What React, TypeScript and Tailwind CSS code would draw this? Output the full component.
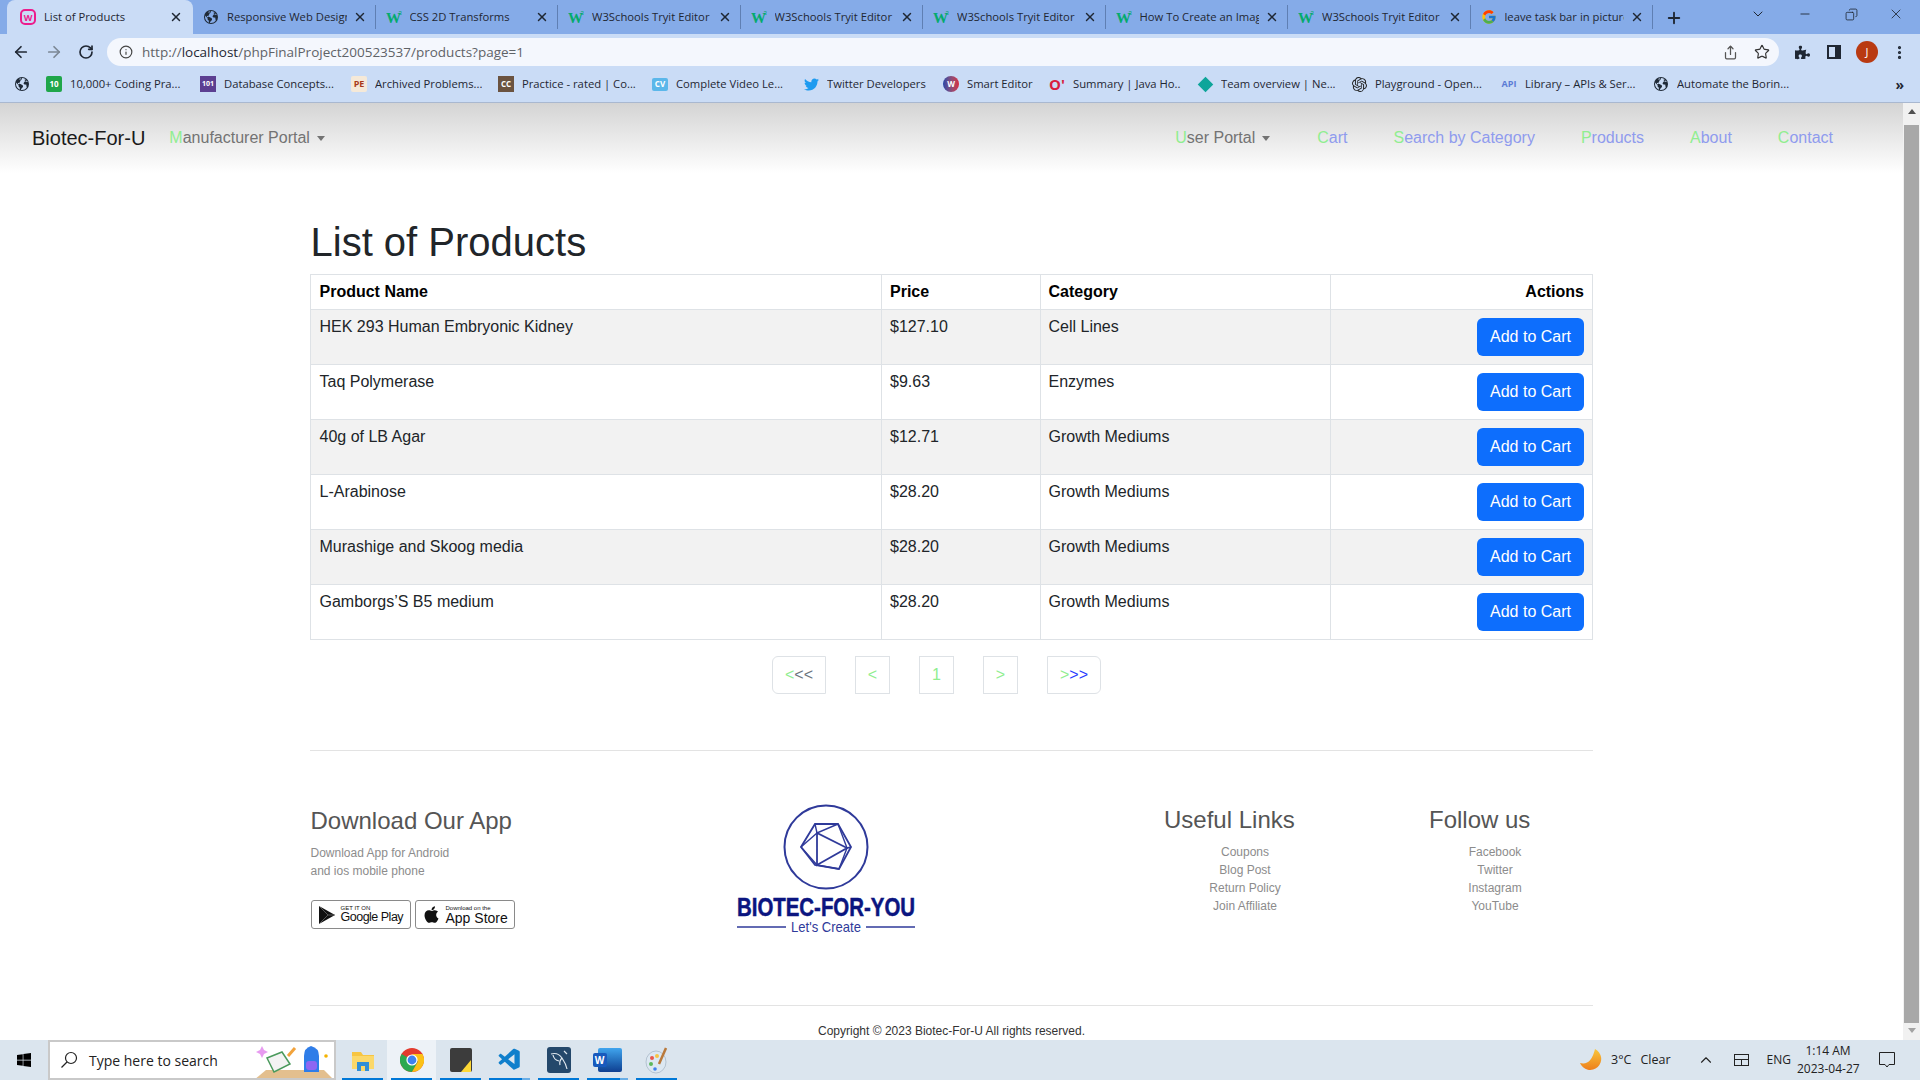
import { ArrowLeft, ArrowRight, ChevronDown, ChevronUp, Copy, Info, Minus, MoreVertical, Plus, RotateCw, Share, Star, X } from "lucide-react";
import { FaApple, FaPuzzlePiece, FaTwitter, FaWindows } from "react-icons/fa";
import { FcGoogle } from "react-icons/fc";
import { SiOpenai } from "react-icons/si";
import { VscVscode } from "react-icons/vsc";
import { IoEarth } from "react-icons/io5";
import { ReactNode } from "react";

const ui = "font-['Open_Sans',sans-serif]";

const W3 = () => (
  <svg width="16" height="16" viewBox="0 0 16 16">
    <text x="0" y="14" fontFamily="Liberation Serif" fontWeight="700" fontSize="15" fill="#04aa6d">W</text>
    <text x="12.5" y="6" fontFamily="Liberation Sans" fontSize="6" fill="#04aa6d">3</text>
  </svg>
);

const Globe = () => <IoEarth size={16} className="text-[#1f2a37]" />;

const WebIcon = () => (
  <span className="flex h-4 w-4 items-center justify-center rounded-[5px] border-2 border-[#ec1c8c] text-[9px] font-bold leading-none text-[#ec1c8c]">W</span>
);

const tabs: { icon: ReactNode; title: string }[] = [
  { icon: <Globe />, title: "Responsive Web Design" },
  { icon: <W3 />, title: "CSS 2D Transforms" },
  { icon: <W3 />, title: "W3Schools Tryit Editor" },
  { icon: <W3 />, title: "W3Schools Tryit Editor" },
  { icon: <W3 />, title: "W3Schools Tryit Editor" },
  { icon: <W3 />, title: "How To Create an Image" },
  { icon: <W3 />, title: "W3Schools Tryit Editor" },
  { icon: <FcGoogle size={16} />, title: "leave task bar in picture" },
];

const bookmarks: { icon: ReactNode; title: string; width: string }[] = [
  { icon: <span className="flex h-4 w-4 items-center justify-center rounded-[2px] bg-[#1fa64a] text-[8px] font-bold text-white">10</span>, title: "10,000+ Coding Pra...", width: "w-[114px]" },
  { icon: <span className="flex h-4 w-4 items-center justify-center bg-[#5c3f91] text-[7px] font-bold text-white">101</span>, title: "Database Concepts...", width: "w-[111px]" },
  { icon: <span className="flex h-4 w-4 items-center justify-center rounded-[2px] bg-[#f5e9d8] text-[9px] font-bold text-[#a8391b]">PE</span>, title: "Archived Problems...", width: "w-[107px]" },
  { icon: <span className="flex h-4 w-4 items-center justify-center bg-[#6b5340] text-[8px] font-bold text-white">CC</span>, title: "Practice - rated | Co...", width: "w-[114px]" },
  { icon: <span className="flex h-[13px] w-4 items-center justify-center rounded-[2px] bg-[#5bb7ea] text-[8px] font-bold text-white">CV</span>, title: "Complete Video Le...", width: "w-[111px]" },
  { icon: <FaTwitter size={15} className="text-[#1d9bf0]" />, title: "Twitter Developers", width: "w-[100px]" },
  { icon: <span className="flex h-4 w-4 items-center justify-center rounded-full bg-gradient-to-r from-[#2446a8] to-[#d8243c] text-[8px] font-bold text-white">W</span>, title: "Smart Editor", width: "w-[66px]" },
  { icon: <span className="text-[15px] font-bold leading-4 text-[#d81e3f]">O'</span>, title: "Summary | Java Ho...", width: "w-[108px]" },
  { icon: <span className="h-[11px] w-[11px] rotate-45 bg-[#0ea59a]" />, title: "Team overview | Ne...", width: "w-[114px]" },
  { icon: <SiOpenai size={15} className="text-[#222]" />, title: "Playground - Open...", width: "w-[110px]" },
  { icon: <span className="text-[9px] font-bold text-[#5b7bd5]">API</span>, title: "Library – APIs & Ser...", width: "w-[112px]" },
  { icon: <Globe />, title: "Automate the Borin...", width: "w-[113px]" },
];

const products = [
  { name: "HEK 293 Human Embryonic Kidney", price: "$127.10", category: "Cell Lines" },
  { name: "Taq Polymerase", price: "$9.63", category: "Enzymes" },
  { name: "40g of LB Agar", price: "$12.71", category: "Growth Mediums" },
  { name: "L-Arabinose", price: "$28.20", category: "Growth Mediums" },
  { name: "Murashige and Skoog media", price: "$28.20", category: "Growth Mediums" },
  { name: "Gamborgs’S B5 medium", price: "$28.20", category: "Growth Mediums" },
];

const Caret = () => <span className="ml-[7px] mr-[1px] inline-block h-0 w-0 border-x-[4px] border-t-[5px] border-x-transparent border-t-[#737373] align-middle" />;

const NavLink = ({ label }: { label: string }) => (
  <a className="text-[#8f9bee]"><span className="text-[#90ee90]">{label[0]}</span>{label.slice(1)}</a>
);

const Dropdown = ({ label }: { label: string }) => (
  <a className="whitespace-nowrap text-[#737373]"><span className="text-[#90ee90]">{label[0]}</span>{label.slice(1)}<Caret /></a>
);

function BrowserChrome() {
  return (
    <header className={`${ui} shrink-0 text-[#1f2733]`}>
      <div className="flex h-[34px] bg-[#85abe8] pl-[7px]">
        <div className="flex w-[186px] items-center rounded-t-[8px] bg-[#cadcf6] pl-[13px] pr-[10px]">
          <WebIcon />
          <span className="ml-[8px] flex-1 whitespace-nowrap text-[11.25px]">List of Products</span>
          <X size={14} strokeWidth={2.5} />
        </div>
        {tabs.map((t, i) => (
          <div key={i} className="my-[5px] flex w-[182.5px] items-center border-r border-[#5f7fb3] pl-[10px] pr-[8px]">
            <span className="flex w-4 shrink-0 justify-center">{t.icon}</span>
            <span className="ml-[8px] flex-1 overflow-hidden whitespace-nowrap text-[11.25px]">{t.title}</span>
            <X size={14} strokeWidth={2.5} className="ml-[6px] shrink-0" />
          </div>
        ))}
        <Plus size={18} strokeWidth={2.5} className="ml-[12px] mt-[9px]" />
        <div className="ml-auto flex h-[28px] items-center pr-[16px]">
          <ChevronDown size={16} strokeWidth={1.5} />
          <Minus size={14} strokeWidth={1.5} className="ml-[32px]" />
          <Copy size={13} strokeWidth={1.5} className="ml-[33px] -scale-x-100" />
          <X size={16} strokeWidth={1.25} className="ml-[30px]" />
        </div>
      </div>
      <div className="flex h-[34px] items-center bg-[#cadcf6] pl-[12px] pr-[12px] pt-[2px]">
        <ArrowLeft size={18} strokeWidth={2.25} />
        <ArrowRight size={18} strokeWidth={2.25} className="ml-[15px] text-[#7b8794]" />
        <RotateCw size={16} strokeWidth={2.5} className="ml-[15px]" />
        <div className="ml-[13px] flex h-[28px] w-[1672px] items-center rounded-full bg-[#f4f7fd] pl-[12px] pr-[9px]">
          <Info size={14} className="text-[#444]" />
          <span className="ml-[9px] text-[13.5px] text-[#5f6368]">http://<span className="text-[#1f2733]">localhost</span>/phpFinalProject200523537/products?page=1</span>
          <Share size={15} className="ml-auto text-[#555]" />
          <Star size={16} strokeWidth={1.75} className="ml-[16px] text-[#333]" />
        </div>
        <FaPuzzlePiece size={15} className="ml-[16px]" />
        <span className="ml-[17px] h-[14px] w-[14px] border-[2px] border-r-[6px] border-[#1f2733]" />
        <span className="ml-[15px] flex h-[22px] w-[22px] items-center justify-center rounded-full bg-[#b93a12] text-[11px] text-white">J</span>
        <MoreVertical size={17} strokeWidth={2.5} className="ml-[13px]" />
      </div>
      <div className="flex h-[35px] items-center border-b border-[#a9b8d0] bg-[#cadcf6] pb-[2px] pl-[14px]">
        <Globe />
        <div className="ml-[16px] flex gap-[16px]">
          {bookmarks.map((b, i) => (
            <div key={i} className="flex items-center gap-[8px]">
              <span className="flex h-4 w-4 shrink-0 items-center justify-center">{b.icon}</span>
              <span className={`${b.width} overflow-hidden whitespace-nowrap text-[11.25px]`}>{b.title}</span>
            </div>
          ))}
        </div>
        <span className="ml-auto pr-[16px] text-[14px] font-bold">»</span>
      </div>
    </header>
  );
}

const PageBox = ({ first, rest, width, rounded, color }: { first: string; rest?: string; width: string; rounded?: string; color?: string }) => (
  <span className={`flex h-[38px] items-center justify-center border border-[#dee2e6] text-[16px] ${width} ${rounded ?? ""}`}>
    <span className="text-[#90ee90]">{first}</span>
    {rest && <span className={color}>{rest}</span>}
  </span>
);

function Logo() {
  return (
    <svg width="180" height="136" viewBox="0 0 180 136" className="block">
      <circle cx="89" cy="46" r="41.5" fill="none" stroke="#2f3a9a" strokeWidth="2" />
      <g fill="none" stroke="#2f3a9a" strokeWidth="1.4" transform="translate(0 4)">
        <polygon points="78,19 101,19 114,42 102,64 78,60 64,42" strokeWidth="1.8" />
        <polygon points="80,28 80,60 110,43" strokeWidth="1.8" />
        <path d="M78 19 80 28 101 19M64 42 80 28M64 42 80 60M101 19 110 43M110 43 114 42M110 43 102 64M80 60 102 64" />
      </g>
      <text x="0" y="115" fontFamily="Liberation Sans" fontWeight="700" fontSize="25" fill="#0b1580" stroke="#0b1580" strokeWidth=".5" textLength="178" lengthAdjust="spacingAndGlyphs">BIOTEC-FOR-YOU</text>
      <line x1="0" y1="126" x2="49" y2="126" stroke="#2f3a9a" strokeWidth="1.5" />
      <line x1="129" y1="126" x2="178" y2="126" stroke="#2f3a9a" strokeWidth="1.5" />
      <text x="54" y="131" fontFamily="Liberation Sans" fontSize="15" fill="#2f3a9a" textLength="70" lengthAdjust="spacingAndGlyphs">Let's Create</text>
    </svg>
  );
}

const StoreBadge = ({ icon, small, big, width, bigSize }: { icon: ReactNode; small: string; big: string; width: string; bigSize: string }) => (
  <div className={`flex h-[29px] items-center gap-[5px] rounded-[3px] border border-[#8a8a8a] bg-white pl-[6px] ${width}`}>
    {icon}
    <div className="leading-none text-[#111]">
      <div className="text-[6px]">{small}</div>
      <div className={`whitespace-nowrap ${bigSize}`}>{big}</div>
    </div>
  </div>
);

function Page() {
  return (
    <main className="min-w-0 flex-1 bg-white font-['Liberation_Sans',sans-serif]">
      <nav className="flex h-[70px] items-start bg-gradient-to-b from-[#d4d4d4] to-white pt-[23px] text-[16px] leading-[24px]">
        <a className="ml-[32px] text-[20px] text-[#1a1a1a]">Biotec-For-U</a>
        <span className="ml-[24px]"><Dropdown label="Manufacturer Portal" /></span>
        <div className="ml-auto mr-[70px] flex gap-[46px]">
          <Dropdown label="User Portal" />
          <NavLink label="Cart" />
          <NavLink label="Search by Category" />
          <NavLink label="Products" />
          <NavLink label="About" />
          <NavLink label="Contact" />
        </div>
      </nav>
      <div className="ml-[310px] w-[1283px]">
        <h1 className="mb-[8px] mt-[45px] pl-[0.5px] text-[40px] leading-[48px] text-[#212529]">List of Products</h1>
        <table className="w-full table-fixed border-collapse border border-[#dee2e6] text-[16px] leading-[24px] text-[#212529]">
          <colgroup>
            <col className="w-[571px]" />
            <col className="w-[159px]" />
            <col className="w-[290px]" />
            <col />
          </colgroup>
          <thead>
            <tr className="text-black">
              <th className="border border-[#dee2e6] py-[5px] pl-[8.5px] pr-[8px] text-left font-bold">Product Name</th>
              <th className="border border-[#dee2e6] px-[8px] py-[5px] text-left font-bold">Price</th>
              <th className="border border-[#dee2e6] py-[5px] pl-[7.5px] pr-[8px] text-left font-bold">Category</th>
              <th className="border border-[#dee2e6] px-[8px] py-[5px] text-right font-bold">Actions</th>
            </tr>
          </thead>
          <tbody>
            {products.map((p, i) => (
              <tr key={i} className={i % 2 === 0 ? "bg-[#f2f2f2]" : "bg-white"}>
                <td className="border border-[#dee2e6] pl-[8.5px] pr-[8px] pt-[5px] align-top">{p.name}</td>
                <td className="border border-[#dee2e6] px-[8px] pt-[5px] align-top">{p.price}</td>
                <td className="border border-[#dee2e6] pl-[7.5px] pr-[8px] pt-[5px] align-top">{p.category}</td>
                <td className="border border-[#dee2e6] px-[8px] py-[8px] text-right">
                  <button className="h-[38px] w-[107px] rounded-[6px] bg-[#0d6efd] text-[16px] text-white">Add to Cart</button>
                </td>
              </tr>
            ))}
          </tbody>
        </table>
        <div className="mt-[16px] flex justify-center gap-[29px] pr-[30px]">
          <PageBox first="<" rest="<<" width="w-[54px]" rounded="rounded-l-[6px]" color="text-[#6c757d]" />
          <PageBox first="<" width="w-[35px]" />
          <PageBox first="1" width="w-[35px]" />
          <PageBox first=">" width="w-[35px]" />
          <PageBox first=">" rest=">>" width="w-[54px]" rounded="rounded-r-[6px]" color="text-[#2a3cff]" />
        </div>
        <hr className="mt-[56px] border-[#e3e3e3]" />
        <footer className="flex h-[254px] pt-[54px]">
          <div className="w-[427px] pl-[0.5px] pt-[1px]">
            <h3 className="text-[24px] leading-[29px] text-[#555]">Download Our App</h3>
            <p className="mt-[9px] text-[12px] leading-[18px] text-[#8c8c8c]">Download App for Android<br />and ios mobile phone</p>
            <div className="mt-[20px] flex gap-[4px]">
              <StoreBadge
                width="w-[100px]"
                bigSize="text-[12.5px] tracking-[-0.5px]"
                small="GET IT ON"
                big="Google Play"
                icon={<svg width="18" height="20" viewBox="0 0 18 20"><path d="M1 1 17 10 1 19Z" fill="#111" /><path d="M1 1 10 10 1 19M10 10 17 10" stroke="#777" strokeWidth=".7" fill="none" /></svg>}
              />
              <StoreBadge width="w-[100px]" bigSize="text-[14px]" small="Download on the" big="App Store" icon={<FaApple size={19} className="text-[#111]" />} />
            </div>
          </div>
          <div className="-mt-[4px] w-[180px]"><Logo /></div>
          <div className="ml-[247px] w-[162px]">
            <h3 className="text-[24px] leading-[29px] text-[#555]">Useful Links</h3>
            <ul className="mt-[9px] text-center text-[12px] leading-[18px] text-[#8c8c8c]">
              <li>Coupons</li><li>Blog Post</li><li>Return Policy</li><li>Join Affiliate</li>
            </ul>
          </div>
          <div className="ml-[103px] w-[132px]">
            <h3 className="text-[24px] leading-[29px] text-[#555]">Follow us</h3>
            <ul className="mt-[9px] text-center text-[12px] leading-[18px] text-[#8c8c8c]">
              <li>Facebook</li><li>Twitter</li><li>Instagram</li><li>YouTube</li>
            </ul>
          </div>
        </footer>
        <hr className="border-[#e3e3e3]" />
        <p className="mt-[16px] text-center text-[12px] leading-[18px] text-[#333]">Copyright © 2023 Biotec-For-U All rights reserved.</p>
      </div>
    </main>
  );
}

function Scrollbar() {
  return (
    <aside className="flex w-[17px] shrink-0 flex-col items-center bg-[#f1f1f1]">
      <span className="mt-[6px] h-0 w-0 border-x-[4px] border-b-[5px] border-x-transparent border-b-[#505050]" />
      <span className="mt-[11px] h-[898px] w-[15px] bg-[#a8a8a8]" />
      <span className="mt-[5px] h-0 w-0 border-x-[4px] border-t-[5px] border-x-transparent border-t-[#a3a3a3]" />
    </aside>
  );
}

const TaskApp = ({ children, active, split }: { children: ReactNode; active?: boolean; split?: boolean }) => (
  <div className={`relative flex h-[40px] w-[49px] items-center justify-center ${active ? "bg-[#edf2f7]" : ""}`}>
    {children}
    <span className={`absolute bottom-0 left-[4px] right-[4px] h-[2px] bg-[#0078d7] ${split ? "border-r-[8px] border-[#6aaee6]" : ""}`} />
  </div>
);

const ChromeIcon = () => (
  <svg width="24" height="24" viewBox="0 0 24 24">
    <circle cx="12" cy="12" r="12" fill="#e33b2e" />
    <path d="M12 12 1.6 6A12 12 0 0 0 12 24L18 13.5Z" fill="#2da94f" />
    <path d="M12 6H22.4A12 12 0 0 1 12 24L18 13.5Z" fill="#fbc116" />
    <circle cx="12" cy="12" r="5.6" fill="#fff" />
    <circle cx="12" cy="12" r="4.4" fill="#3f82ed" />
  </svg>
);

function Taskbar() {
  return (
    <footer className={`${ui} flex h-[40px] shrink-0 items-center bg-[#dbe5ee] text-[#222]`}>
      <FaWindows size={16} className="ml-[16px] text-black" />
      <div className="relative ml-[16px] flex h-[40px] w-[288px] items-center overflow-hidden border-2 border-[#c9c9c9] bg-white pl-[10px]">
        <svg width="18" height="18" viewBox="0 0 18 18" fill="none" stroke="#222" strokeWidth="1.2"><circle cx="11" cy="7" r="5.5" /><path d="M7 11 1.5 16.5" /></svg>
        <span className="ml-[11px] text-[14px]">Type here to search</span>
        <svg width="80" height="38" viewBox="0 0 80 38" className="absolute right-0 top-0">
          <path d="M0 38 12 28H70L80 38Z" fill="#e3bf8e" />
          <path d="M13 16 28 10 36 22 20 30Z" fill="#f3f3f3" stroke="#4a9a5c" strokeWidth="1.5" />
          <path d="M34 14 41 6" stroke="#f2a33c" strokeWidth="3" />
          <path d="M50 30V14Q50 6 57 4 65 6 65 14V30Z" fill="#2f7de8" />
          <rect x="52" y="19" width="11" height="9" rx="3" fill="#8f66f2" />
          <path d="M8 4 10 8 14 10 10 12 8 16 6 12 2 10 6 8Z" fill="#e79bf0" />
          <circle cx="72" cy="14" r="1.8" fill="#f5b301" />
        </svg>
      </div>
      <div className="ml-[2px] flex">
        <TaskApp>
          <svg width="24" height="22" viewBox="0 0 24 22"><path d="M1 3H10L12 6H23V20H1Z" fill="#f7c542" /><rect x="1" y="7" width="22" height="13" fill="#fbd86a" /><rect x="6" y="13" width="12" height="9" fill="#2f8fd8" /><rect x="10" y="17" width="4" height="5" fill="#fbd86a" /></svg>
        </TaskApp>
        <TaskApp active><ChromeIcon /></TaskApp>
        <TaskApp>
          <svg width="22" height="24" viewBox="0 0 22 24"><rect width="22" height="24" rx="2" fill="#3c3c3c" /><path d="M11 24 21 12V24Z" fill="#fdd835" /></svg>
        </TaskApp>
        <TaskApp split><VscVscode size={26} className="text-[#0f7fcc]" /></TaskApp>
        <TaskApp>
          <svg width="24" height="26" viewBox="0 0 24 26"><rect width="24" height="26" rx="3" fill="#24486b" /><path d="M4 7Q11 5 15 11T20 22M15 11Q12 14 13 18M6 8Q7 13 12 14M17 4 20 7" fill="none" stroke="#dfe7ee" strokeWidth="1.2" /></svg>
        </TaskApp>
        <TaskApp split>
          <span className="relative ml-[4px] h-[24px] w-[24px] rounded-[2px] bg-gradient-to-b from-[#41a5ee] to-[#103f91]">
            <span className="absolute -left-[5px] top-[5px] flex h-[14px] w-[14px] items-center justify-center rounded-[2px] bg-[#185abd] text-[10px] font-bold text-white">W</span>
          </span>
        </TaskApp>
        <TaskApp>
          <svg width="24" height="28" viewBox="0 0 24 28"><ellipse cx="11" cy="16" rx="10" ry="11" fill="#dce8f2" stroke="#9ab" strokeWidth=".6" /><circle cx="7" cy="12" r="2" fill="#e9584c" /><circle cx="12" cy="10" r="2" fill="#f6c445" /><circle cx="6" cy="18" r="2" fill="#5cb85c" /><circle cx="10" cy="23" r="1.8" fill="#3f82ed" /><path d="M14 18 21 2" stroke="#b9793b" strokeWidth="2.5" /></svg>
        </TaskApp>
      </div>
      <svg width="22" height="22" viewBox="0 0 22 22" className="ml-auto">
        <defs><linearGradient id="moon" x1="0" y1="0" x2="0" y2="1"><stop offset="0" stopColor="#f8c63c" /><stop offset="1" stopColor="#ee7f1c" /></linearGradient></defs>
        <path d="M15 0A11 11 0 1 1 0 14Q11 17 15 0Z" fill="url(#moon)" />
      </svg>
      <span className="ml-[9px] whitespace-nowrap text-[12.5px]">3°C</span>
      <span className="ml-[9px] text-[12.5px]">Clear</span>
      <ChevronUp size={18} strokeWidth={1.5} className="ml-[26px]" />
      <span className="ml-[19px] flex h-[12px] w-[15px] flex-col border border-[#222]"><span className="h-[5px] border-b border-[#222]" /><span className="mx-auto h-[5px] w-px bg-[#222]" /></span>
      <span className="ml-[18px] text-[12px]">ENG</span>
      <div className="ml-[6px] w-[62px] text-center text-[12px] leading-[18px]">
        <div>1:14 AM</div>
        <div className="whitespace-nowrap">2023-04-27</div>
      </div>
      <svg width="16" height="17" viewBox="0 0 16 17" fill="none" stroke="#222" strokeWidth="1" className="ml-[20px] mr-[25px]"><path d="M.5.5H15.5V12.5H10L8 15 6 12.5H.5Z" /></svg>
    </footer>
  );
}

export default function App() {
  return (
    <div className="flex h-screen w-screen flex-col overflow-hidden font-['Liberation_Sans',sans-serif]">
      <BrowserChrome />
      <div className="flex min-h-0 flex-1 overflow-hidden">
        <Page />
        <Scrollbar />
      </div>
      <Taskbar />
    </div>
  );
}
